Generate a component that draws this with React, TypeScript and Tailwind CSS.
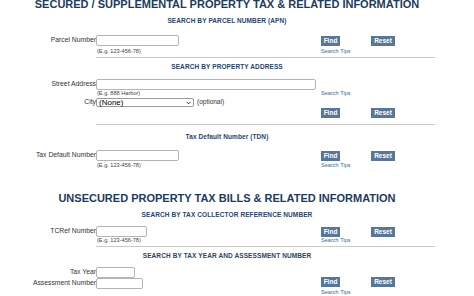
import React from "react";

const font = { fontFamily: '"Liberation Sans", Arial, sans-serif' };

const rowGrid = "grid grid-cols-[96px_225px_50px_1fr]";

function Title({ children, className = "" }: { children: React.ReactNode; className?: string }) {
  return (
    <div className={`h-[11px] flex items-center justify-center text-[11px] leading-none font-bold text-[#1e3a5d] whitespace-nowrap ${className}`}>
      {children}
    </div>
  );
}

function Sub({ children, className = "" }: { children: React.ReactNode; className?: string }) {
  return (
    <div className={`h-[8px] flex items-center justify-center text-[6.5px] leading-none font-bold tracking-[0.1px] text-[#2c4566] whitespace-nowrap ${className}`}>
      {children}
    </div>
  );
}

function Label({ children }: { children: React.ReactNode }) {
  return (
    <div className="flex items-center justify-end text-[6.8px] leading-none text-[#333] whitespace-nowrap">
      {children}
    </div>
  );
}

function Field({ w }: { w: string }) {
  return <input className={`block ${w} h-[11px] bg-white border border-[#b4b4b4] rounded-[2px]`} />;
}

function Buttons({ offset = "mt-px" }: { offset?: string }) {
  return (
    <>
      <div className={offset}>
        <button className="w-[19px] h-[10px] bg-[#587695] text-white text-[6.5px] font-bold leading-none flex items-center justify-center">
          Find
        </button>
      </div>
      <div className={offset}>
        <button className="w-[24px] h-[10px] bg-[#587695] text-white text-[6.5px] font-bold leading-none flex items-center justify-center">
          Reset
        </button>
      </div>
    </>
  );
}

function Example({ children }: { children: React.ReactNode }) {
  return <div className="text-[5.6px] leading-none text-[#444] whitespace-nowrap flex items-center pl-px">{children}</div>;
}

function Tips() {
  return <div className="text-[5.6px] leading-none text-[#3e6a8c] whitespace-nowrap flex items-center">Search Tips</div>;
}

function Divider({ className = "" }: { className?: string }) {
  return <div className={`ml-[96px] w-[339px] h-px bg-[#cacaca] ${className}`} />;
}

export default function App() {
  return (
    <div className="w-[474px] h-[296px] bg-white overflow-hidden" style={font}>
      <div className="w-[454px]">
        <Title className="-mt-px">SECURED / SUPPLEMENTAL PROPERTY TAX &amp; RELATED INFORMATION</Title>
        <Sub className="mt-[7px]">SEARCH BY PARCEL NUMBER (APN)</Sub>

        <div className={`${rowGrid} h-[11px] mt-[10px]`}>
          <Label>Parcel Number</Label>
          <Field w="w-[83px]" />
          <Buttons />
        </div>
        <div className={`${rowGrid} h-[8px] mt-[2px]`}>
          <div />
          <Example>(E.g. 123-456-78)</Example>
          <Tips />
        </div>
        <Divider className="mt-px" />

        <Sub className="mt-[5px]">SEARCH BY PROPERTY ADDRESS</Sub>
        <div className={`${rowGrid} h-[11px] mt-[8px]`}>
          <Label>Street Address</Label>
          <Field w="w-[220px]" />
        </div>
        <div className={`${rowGrid} h-[6px] mt-px`}>
          <div />
          <Example>(E.g. 888 Harbor)</Example>
          <Tips />
        </div>
        <div className={`${rowGrid} h-[9px] mt-px`}>
          <Label>City</Label>
          <div className="flex items-center gap-[3px]">
            <div className="w-[98px] h-[9px] border border-[#9a9a9a] rounded-[2px] bg-white flex items-center justify-between pl-[2px] pr-[2px]">
              <span className="text-[8px] leading-none text-black">(None)</span>
              <svg width="5" height="4" viewBox="0 0 6 4">
                <path d="M0.6 0.6 L3 3 L5.4 0.6" fill="none" stroke="#222" strokeWidth="1.1" />
              </svg>
            </div>
            <span className="text-[6.5px] leading-none text-[#333] whitespace-nowrap">(optional)</span>
          </div>
        </div>
        <div className={`${rowGrid} h-[11px]`}>
          <div />
          <div />
          <Buttons />
        </div>
        <Divider className="mt-[6px]" />

        <Sub className="mt-[8px]">Tax Default Number (TDN)</Sub>
        <div className={`${rowGrid} h-[11px] mt-[9px]`}>
          <Label>Tax Default Number</Label>
          <Field w="w-[83px]" />
          <Buttons />
        </div>
        <div className={`${rowGrid} h-[8px] mt-px`}>
          <div />
          <Example>(E.g. 123-456-78)</Example>
          <Tips />
        </div>

        <Title className="mt-[23px]">UNSECURED PROPERTY TAX BILLS &amp; RELATED INFORMATION</Title>
        <Sub className="mt-[7px]">SEARCH BY TAX COLLECTOR REFERENCE NUMBER</Sub>
        <div className={`${rowGrid} h-[11px] mt-[7px]`}>
          <Label>TCRef Number</Label>
          <Field w="w-[51px]" />
          <Buttons />
        </div>
        <div className={`${rowGrid} h-[6px] mt-px`}>
          <div />
          <Example>(E.g. 123-456-78)</Example>
          <Tips />
        </div>
        <Divider className="mt-[2px]" />

        <Sub className="mt-[5px]">SEARCH BY TAX YEAR AND ASSESSMENT NUMBER</Sub>
        <div className={`${rowGrid} h-[11px] mt-[7px]`}>
          <Label>Tax Year</Label>
          <Field w="w-[39px]" />
        </div>
        <div className={`${rowGrid} h-[11px]`}>
          <Label>Assessment Number</Label>
          <Field w="w-[47px]" />
          <Buttons offset="-mt-px" />
        </div>
        <div className={`${rowGrid} h-[6px] mt-px`}>
          <div />
          <div />
          <Tips />
        </div>
      </div>
    </div>
  );
}
